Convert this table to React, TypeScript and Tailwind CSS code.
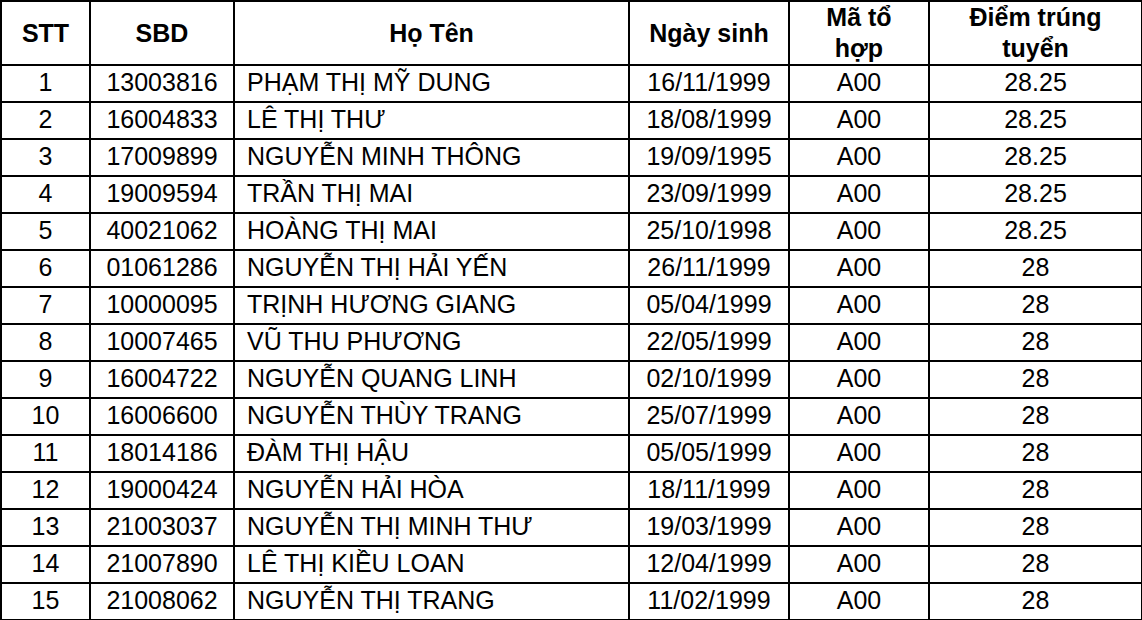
import React from 'react';

type Row = {
  stt: number;
  sbd: string;
  name: string;
  dob: string;
  code: string;
  score: string;
};

const ROWS: Row[] = [
  { stt: 1, sbd: '13003816', name: 'PHẠM THỊ MỸ DUNG', dob: '16/11/1999', code: 'A00', score: '28.25' },
  { stt: 2, sbd: '16004833', name: 'LÊ THỊ THƯ', dob: '18/08/1999', code: 'A00', score: '28.25' },
  { stt: 3, sbd: '17009899', name: 'NGUYỄN MINH THÔNG', dob: '19/09/1995', code: 'A00', score: '28.25' },
  { stt: 4, sbd: '19009594', name: 'TRẦN THỊ MAI', dob: '23/09/1999', code: 'A00', score: '28.25' },
  { stt: 5, sbd: '40021062', name: 'HOÀNG THỊ MAI', dob: '25/10/1998', code: 'A00', score: '28.25' },
  { stt: 6, sbd: '01061286', name: 'NGUYỄN THỊ HẢI YẾN', dob: '26/11/1999', code: 'A00', score: '28' },
  { stt: 7, sbd: '10000095', name: 'TRỊNH HƯƠNG GIANG', dob: '05/04/1999', code: 'A00', score: '28' },
  { stt: 8, sbd: '10007465', name: 'VŨ THU PHƯƠNG', dob: '22/05/1999', code: 'A00', score: '28' },
  { stt: 9, sbd: '16004722', name: 'NGUYỄN QUANG LINH', dob: '02/10/1999', code: 'A00', score: '28' },
  { stt: 10, sbd: '16006600', name: 'NGUYỄN THÙY TRANG', dob: '25/07/1999', code: 'A00', score: '28' },
  { stt: 11, sbd: '18014186', name: 'ĐÀM THỊ HẬU', dob: '05/05/1999', code: 'A00', score: '28' },
  { stt: 12, sbd: '19000424', name: 'NGUYỄN HẢI HÒA', dob: '18/11/1999', code: 'A00', score: '28' },
  { stt: 13, sbd: '21003037', name: 'NGUYỄN THỊ MINH THƯ', dob: '19/03/1999', code: 'A00', score: '28' },
  { stt: 14, sbd: '21007890', name: 'LÊ THỊ KIỀU LOAN', dob: '12/04/1999', code: 'A00', score: '28' },
  { stt: 15, sbd: '21008062', name: 'NGUYỄN THỊ TRANG', dob: '11/02/1999', code: 'A00', score: '28' },
];

const th = 'border-2 border-black px-1 text-center align-middle font-bold leading-[31px]';
const td = 'border-2 border-black p-0 pb-[2px] text-center align-middle leading-none';

export default function App() {
  return (
    <div className="h-[620px] w-[1142px] overflow-hidden bg-[#f2f2f2] font-['Liberation_Sans',Arial,sans-serif] text-[25px] text-black">
      <table className="w-[1141px] table-fixed border-collapse bg-white">
        <colgroup>
          <col className="w-[89px]" />
          <col className="w-[144px]" />
          <col className="w-[395px]" />
          <col className="w-[160px]" />
          <col className="w-[140px]" />
          <col className="w-[213px]" />
        </colgroup>
        <thead>
          <tr className="h-[64px]">
            <th className={th}>STT</th>
            <th className={th}>SBD</th>
            <th className={th}>Họ Tên</th>
            <th className={th}>Ngày sinh</th>
            <th className={th}>
              Mã tổ
              <br />
              hợp
            </th>
            <th className={th}>
              Điểm trúng
              <br />
              tuyển
            </th>
          </tr>
        </thead>
        <tbody>
          {ROWS.map((r) => (
            <tr key={r.stt} className="h-[37px]">
              <td className={td}>{r.stt}</td>
              <td className={td}>{r.sbd}</td>
              <td className={`${td} !text-left !pl-[12px]`}>{r.name}</td>
              <td className={td}>{r.dob}</td>
              <td className={td}>{r.code}</td>
              <td className={td}>{r.score}</td>
            </tr>
          ))}
        </tbody>
      </table>
    </div>
  );
}
